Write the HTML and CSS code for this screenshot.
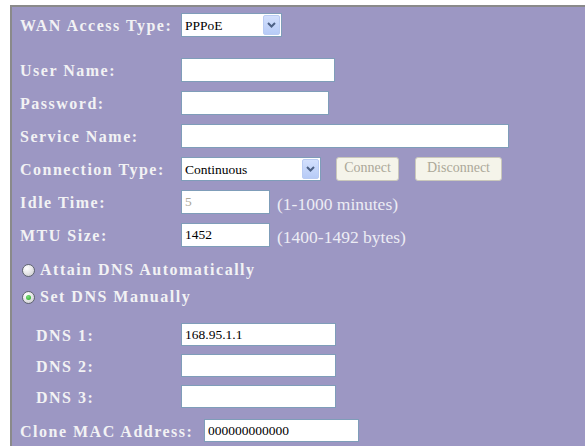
FILE: index.html
```html
<!DOCTYPE html>
<html>
<head>
<meta charset="utf-8">
<title>WAN Setup</title>
<link rel="stylesheet" href="styles.css">
</head>
<body>
<form class="panel">
  <div class="row row-wan">
    <label class="lbl">WAN Access Type:</label>
    <div class="sel sel-wan">
      <select><option>PPPoE</option></select>
      <span class="arrow"><svg width="9" height="6" viewBox="0 0 9 6"><path d="M1 1 L4.5 4.5 L8 1" fill="none" stroke="#4d6185" stroke-width="2"/></svg></span>
    </div>
  </div>

  <div class="stack stack-ppp">
    <div class="row">
      <label class="lbl">User Name:</label>
      <input class="field w-user" type="text">
    </div>
    <div class="row">
      <label class="lbl">Password:</label>
      <input class="field w-pass" type="password">
    </div>
    <div class="row">
      <label class="lbl">Service Name:</label>
      <input class="field w-service" type="text">
    </div>
    <div class="row">
      <label class="lbl">Connection Type:</label>
      <div class="sel sel-conn">
        <select><option>Continuous</option></select>
        <span class="arrow"><svg width="9" height="6" viewBox="0 0 9 6"><path d="M1 1 L4.5 4.5 L8 1" fill="none" stroke="#4d6185" stroke-width="2"/></svg></span>
      </div>
      <button type="button" class="btn btn-connect" disabled>Connect</button>
      <button type="button" class="btn btn-disconnect" disabled>Disconnect</button>
    </div>
    <div class="row">
      <label class="lbl">Idle Time:</label>
      <input class="field w-short" type="text" value="5" disabled>
      <span class="hint">(1-1000 minutes)</span>
    </div>
    <div class="row">
      <label class="lbl">MTU Size:</label>
      <input class="field w-short" type="text" value="1452">
      <span class="hint">(1400-1492 bytes)</span>
    </div>
  </div>

  <div class="stack stack-radio">
    <label class="opt"><input type="radio" name="dns"><span>Attain DNS Automatically</span></label>
    <label class="opt"><input type="radio" name="dns" checked><span>Set DNS Manually</span></label>
  </div>

  <div class="stack stack-dns">
    <div class="row row-dns">
      <label class="lbl lbl-dns">DNS 1:</label>
      <input class="field w-dns" type="text" value="168.95.1.1">
    </div>
    <div class="row row-dns">
      <label class="lbl lbl-dns">DNS 2:</label>
      <input class="field w-dns" type="text">
    </div>
    <div class="row row-dns">
      <label class="lbl lbl-dns">DNS 3:</label>
      <input class="field w-dns" type="text">
    </div>
    <div class="row row-dns row-mac">
      <label class="lbl lbl-mac">Clone MAC Address:</label>
      <input class="field w-dns" type="text" value="000000000000">
    </div>
  </div>
</form>
</body>
</html>
```

FILE: styles.css
```css
html, body {
  margin: 0;
  background: #ffffff;
}

.panel {
  box-sizing: border-box;
  margin: 5px 0 0 10px;
  height: 441px;
  padding: 6px 0 0 8px;
  background: #9c97c3;
  border-top: 2px solid #8a8a8a;
  border-left: 2px solid #8a8a8a;
  display: flex;
  flex-direction: column;
}

.row {
  display: flex;
  align-items: center;
  height: 24px;
}

.lbl {
  flex: none;
  width: 161px;
  padding-top: 2px;
  font: bold 16px "Liberation Serif", serif;
  letter-spacing: 1.5px;
  color: #f2f2f4;
  white-space: nowrap;
}

.stack {
  display: flex;
  flex-direction: column;
}

.stack-ppp {
  margin-top: 21px;
  gap: 9px;
}

.stack-radio {
  margin-top: 10px;
  gap: 1px;
}

.stack-dns {
  margin-top: 13px;
  gap: 8px;
}

.row-dns {
  height: 23px;
}

.row-mac {
  margin-top: 3px;
}

.lbl-dns {
  padding-left: 16px;
  width: 145px;
}

.lbl-mac {
  width: 184px;
}

/* text boxes */
.field {
  box-sizing: border-box;
  height: 100%;
  margin: 0;
  padding: 0 3px;
  border: 1px solid #7f9db9;
  background: #ffffff;
  font: 13.5px "Liberation Serif", serif;
  color: #000000;
  outline: none;
}

.field:disabled {
  color: #aca899;
  background: #ffffff;
}

.w-user { width: 154px; }
.w-pass { width: 148px; }
.w-service { width: 328px; }
.w-short { width: 89px; }
.w-dns { width: 155px; }

/* drop-down lists */
.sel {
  position: relative;
  height: 24px;
  box-sizing: border-box;
}

.sel select {
  appearance: none;
  -webkit-appearance: none;
  box-sizing: border-box;
  width: 100%;
  height: 100%;
  margin: 0;
  padding: 0 0 0 3px;
  border: 1px solid #7f9db9;
  border-radius: 0;
  background: #ffffff;
  font: 13.5px "Liberation Serif", serif;
  color: #000000;
  outline: none;
}

.sel-wan { width: 101px; }
.sel-conn { width: 140px; }

.arrow {
  position: absolute;
  right: 2px;
  top: 2px;
  bottom: 2px;
  width: 17px;
  box-sizing: border-box;
  border: 1px solid #b9cbf3;
  border-radius: 2px;
  background: linear-gradient(#d3e0fd, #b7cbf7);
  display: flex;
  align-items: center;
  justify-content: center;
  pointer-events: none;
}

/* buttons */
.btn {
  box-sizing: border-box;
  height: 24px;
  padding: 0 0 3px;
  border: 1px solid #cac8bb;
  border-radius: 3px;
  background: #f5f4ea;
  color: #aca899;
  font: 14px "Liberation Serif", serif;
}

.btn-connect {
  width: 63px;
  margin-left: 15px;
}

.btn-disconnect {
  width: 87px;
  margin-left: 16px;
}

.hint {
  margin-left: 7px;
  padding-top: 5px;
  font: 17.5px "Liberation Serif", serif;
  color: #ececf4;
  white-space: nowrap;
}

/* radio options */
.opt {
  display: flex;
  align-items: center;
  height: 26px;
  padding-left: 2px;
  font: bold 16px "Liberation Serif", serif;
  letter-spacing: 1.5px;
  color: #f2f2f4;
}

.opt input {
  appearance: none;
  -webkit-appearance: none;
  box-sizing: border-box;
  flex: none;
  width: 13px;
  height: 13px;
  margin: 0 5px 0 0;
  border: 1px solid #5f6470;
  border-radius: 50%;
  background: radial-gradient(circle at 35% 30%, #ffffff 0%, #e9e9ea 45%, #c4c4c8 100%);
  display: grid;
  place-items: center;
}

.opt input:checked::after {
  content: "";
  width: 5px;
  height: 5px;
  border-radius: 50%;
  background: radial-gradient(circle at 40% 35%, #7be07b, #24a424);
}
```
